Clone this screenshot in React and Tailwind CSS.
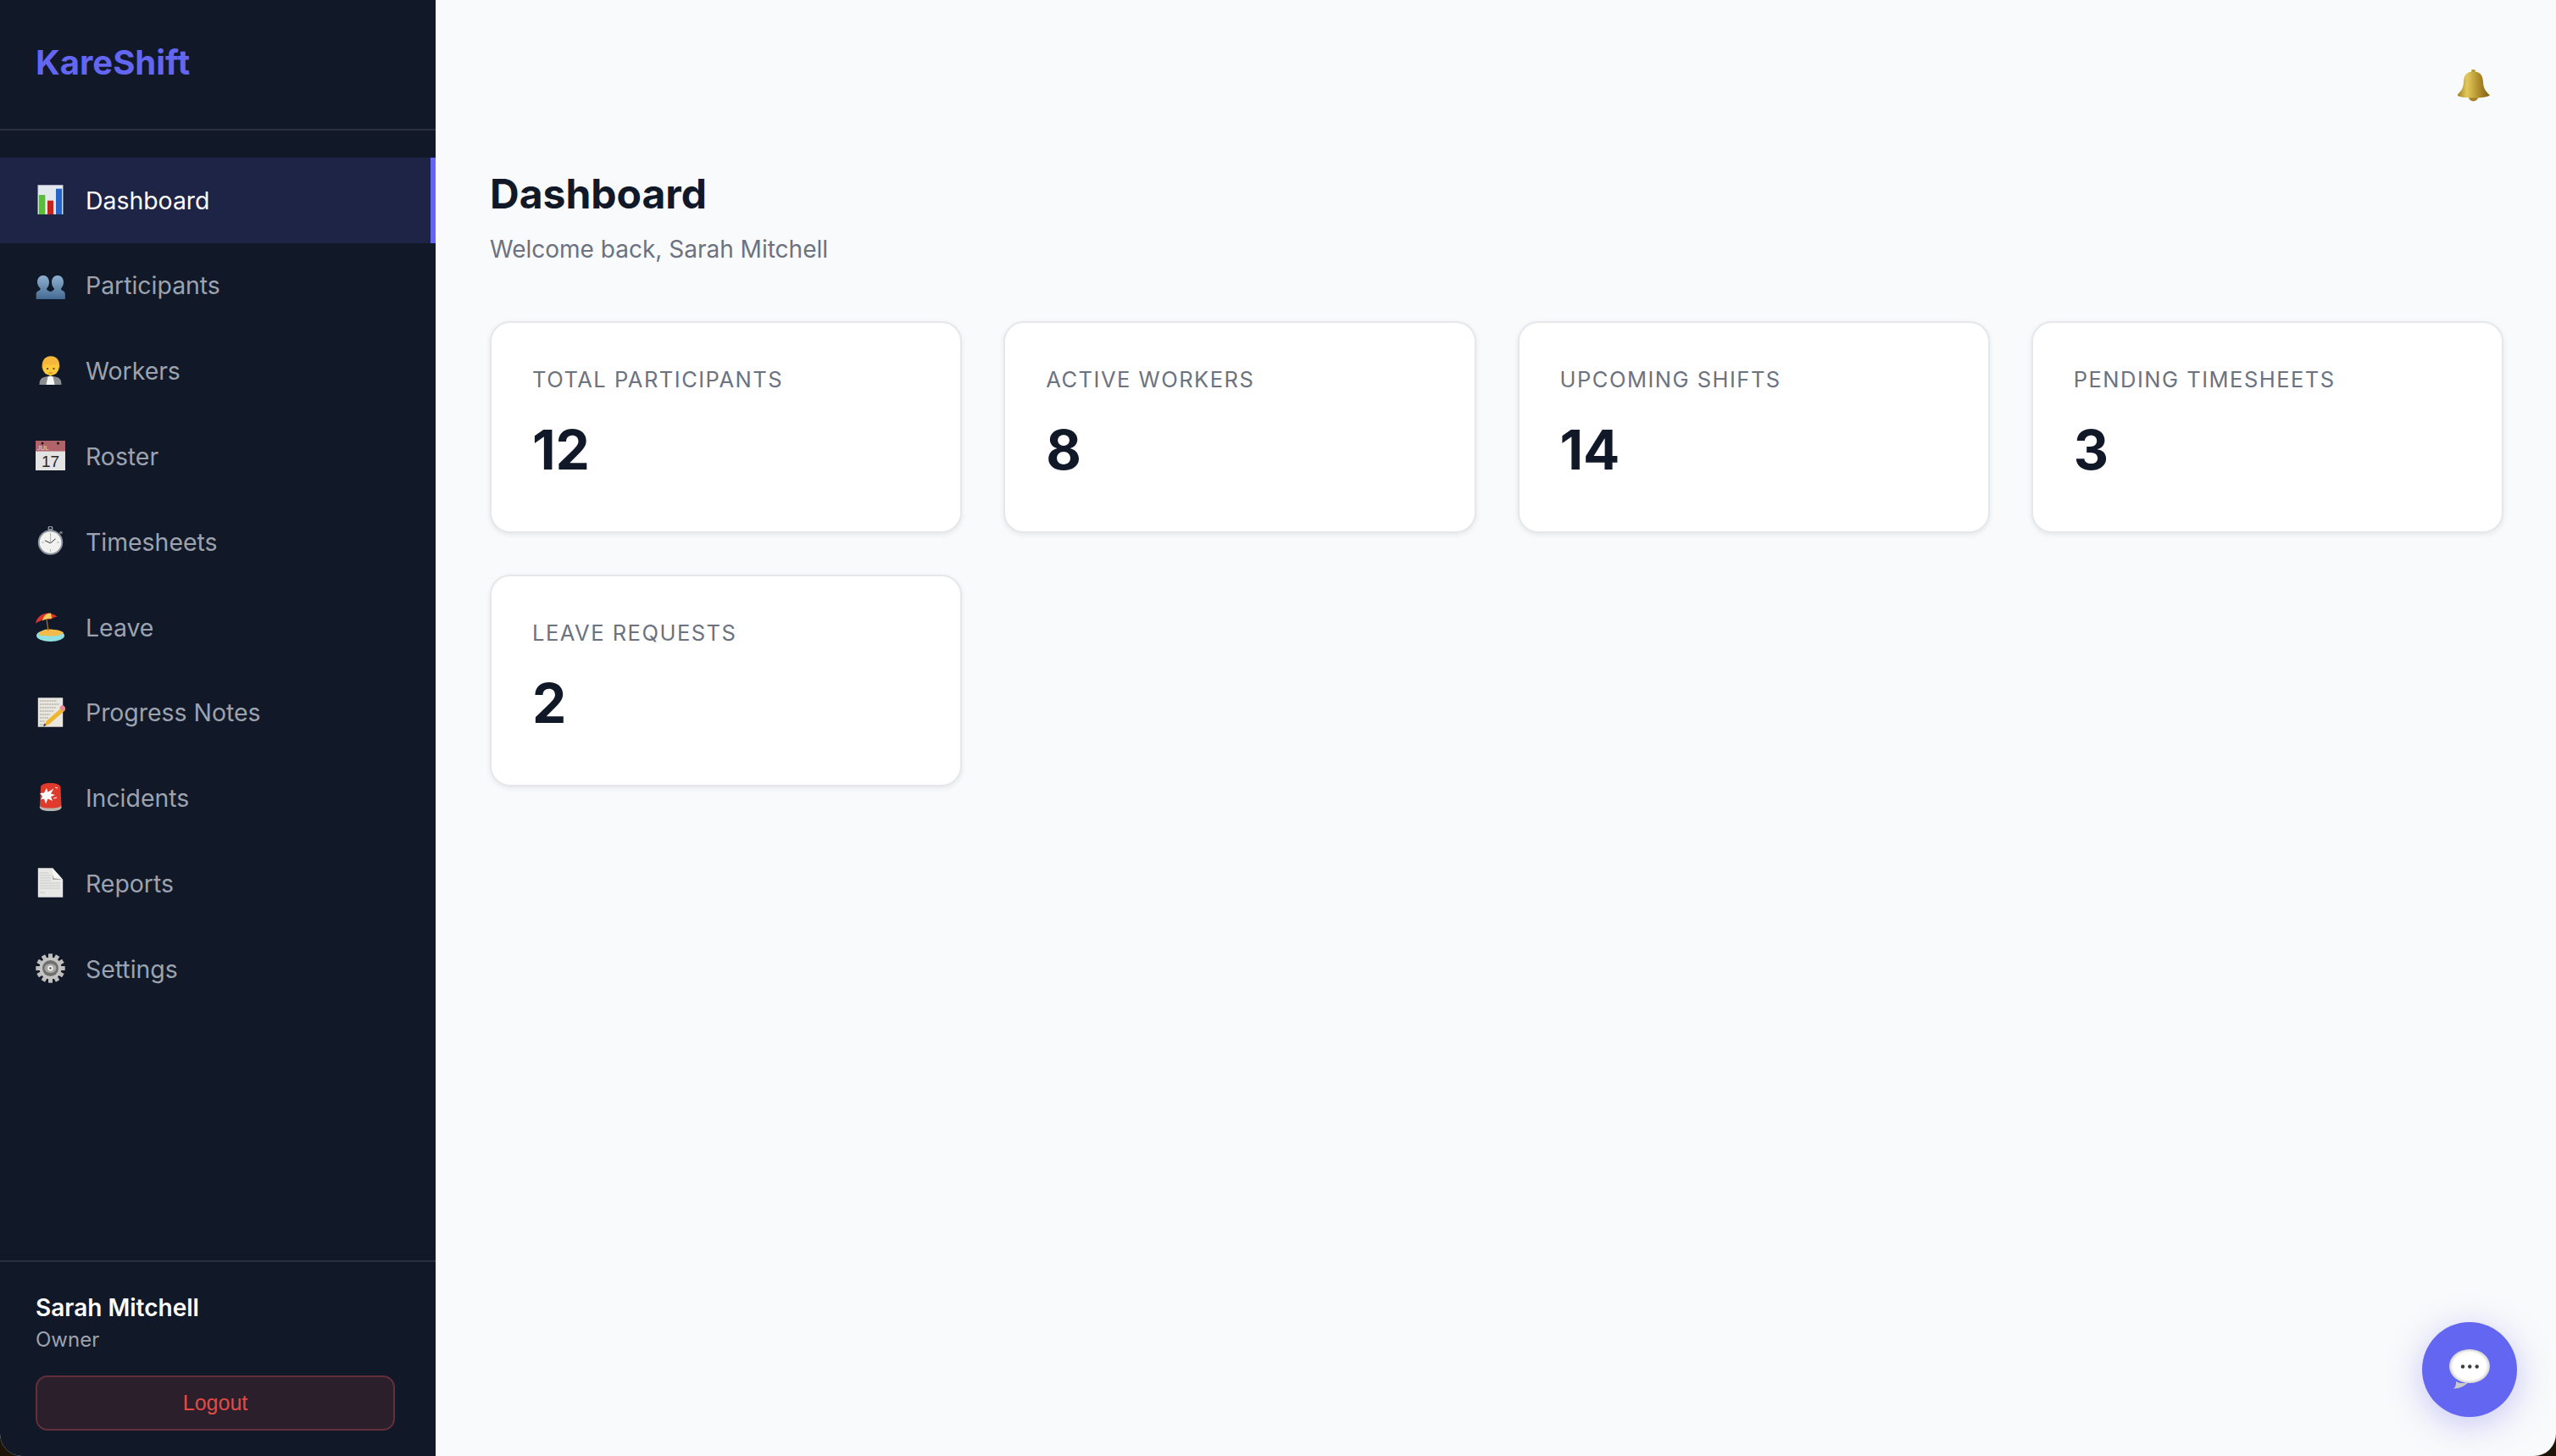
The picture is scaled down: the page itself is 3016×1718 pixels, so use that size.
const inter = '[font-family:Inter,"Noto_Sans",sans-serif]'

function ChartEmoji() {
  return (
    <svg viewBox="0 0 35 35" className="w-[35px] h-[35px]">
      <rect x="2.800" y="0.300" width="29.400" height="34.700" fill="#e3e8ef" stroke="#9aa3ad" strokeWidth="0.600" />
      <rect x="4" y="12" width="7.300" height="23" fill="#5cba3c" />
      <rect x="14" y="18.700" width="7" height="16.300" fill="#c0261d" />
      <rect x="24" y="4.700" width="7" height="30.300" fill="#2a63c7" />
    </svg>
  )
}

function PeopleEmoji() {
  return (
    <svg viewBox="0 0 35 35" className="w-[35px] h-[35px]">
      <defs>
        <linearGradient id="bust" x1="0" y1="0" x2="0" y2="1">
          <stop offset="0" stopColor="#8fb0d2" />
          <stop offset="1" stopColor="#456a92" />
        </linearGradient>
      </defs>
      <g fill="url(#bust)">
        <path d="M26 6c4 0 7 3 7 8 0 3-1.300 6-3 7.500 0 1.500 1 2.200 3 3 1.300.7 1.800 2 1.800 3.500V34H17V28c0-1.500.6-2.800 2-3.500 2-.8 3-1.500 3-3-1.800-1.500-3-4.500-3-7.500 0-5 3-8 7-8z" />
        <path d="M9 6c4 0 7 3 7 8 0 3-1.200 6-3 7.500 0 1.500 1 2.200 3 3 2 .8 4 1.800 4 3.500V34H.7V28c0-1.500.6-2.800 2-3.500 2-.8 3-1.500 3-3C3.900 20 2 17 2 14c0-5 3-8 7-8z" />
      </g>
    </svg>
  )
}

function WorkerEmoji() {
  return (
    <svg viewBox="0 0 35 35" className="w-[35px] h-[35px]">
      <path d="M4.500 35c0-6 2-8.500 7.500-9.500l5.500-1 5.500 1c5.500 1 7.500 3.500 7.500 9.500z" fill="#8b8d8f" />
      <path d="M12.500 35l2-9.500 3-1 3 1 2 9.500z" fill="#f7f7f7" />
      <circle cx="17.800" cy="14.500" r="9.700" fill="#fdc93a" />
      <path d="M8 17C6.500 8 10 1.300 18 1.300S29.500 8 28 17c-.6-3-1.500-5-3-6.500-3 1.200-9 1.200-12.500 0C10 12 8.600 14 8 17z" fill="#f6b73c" />
      <circle cx="14" cy="16" r="1.100" fill="#4a3210" />
      <circle cx="21.500" cy="16" r="1.100" fill="#4a3210" />
      <path d="M15.800 21h4" stroke="#a5651b" strokeWidth="0.800" />
    </svg>
  )
}

function CalendarEmoji() {
  return (
    <svg viewBox="0 0 35 35" className="w-[35px] h-[35px]">
      <rect y="0" width="35" height="35" fill="#e3e3e3" />
      <rect y="0" width="35" height="12.500" fill="#b0646a" />
      <circle cx="8" cy="3" r="1.500" fill="#15171f" />
      <circle cx="26.500" cy="3" r="1.500" fill="#15171f" />
      <text x="2" y="11" fontSize="7.500" fill="#f0dcdc" fontFamily="Liberation Sans">JUL</text>
      <text x="7" y="31" fontSize="19" fill="#26272b" fontFamily="Liberation Sans">17</text>
    </svg>
  )
}

function StopwatchEmoji() {
  return (
    <svg viewBox="0 0 35 35" className="w-[35px] h-[35px]">
      <circle cx="17.500" cy="2.500" r="2.400" fill="none" stroke="#a0a4a8" strokeWidth="1.200" />
      <rect x="15.500" y="3" width="4" height="3" fill="#8d9196" />
      <circle cx="30" cy="7.500" r="1.800" fill="#70747a" />
      <circle cx="17.500" cy="19" r="14.700" fill="#8f96a0" />
      <circle cx="17.500" cy="19" r="12.800" fill="#f1f1ef" />
      <path d="M17.500 9v10" stroke="#d38a72" strokeWidth="0.700" />
      <path d="M11 16.800l6.500 3 6-5" fill="none" stroke="#35363a" strokeWidth="1" />
      <path d="M17.500 8v3M17.500 27v3M7 19h3M25 19h3" stroke="#9b9b9b" strokeWidth="0.700" />
    </svg>
  )
}

function BeachEmoji() {
  return (
    <svg viewBox="0 0 35 35" className="w-[35px] h-[35px]">
      <ellipse cx="17.500" cy="28" rx="16.500" ry="7" fill="#8fe0e2" />
      <path d="M3 27c3-6 9-7 15-6.500 5 .5 12 1 15 4-3 3-8 4-14 4-6 0-13-.3-16-1.500z" fill="#f3bb4a" />
      <path d="M13 9l2 13" stroke="#a5702e" strokeWidth="1.300" />
      <path d="M0 13.500C2 3 14-3 25.700 5.500c-3.500.5-6 2-8.700 3.500-6-1-11 1-17 4.500z" fill="#d9352d" />
      <path d="M8 10.500C9.500 4 14 .8 18 1.500l1 6.500c-4-.6-7 .6-11 2.500z" fill="#f2cf5a" />
    </svg>
  )
}

function MemoEmoji() {
  return (
    <svg viewBox="0 0 35 35" className="w-[35px] h-[35px]">
      <rect x="2.800" y="0.300" width="29.400" height="34.400" fill="#e9e7e0" />
      <g stroke="#77766f" strokeWidth="0.700" strokeDasharray="2 0.800">
        <path d="M5 4h20M5 8h23M5 12h19M5 16h16M5 20h12M5 24h10M5 28h6M5 32h8" />
      </g>
      <path d="M32.500 10.500l-20 17.500-3.500 6.500 7-3L35 15z" fill="#eeb52f" />
      <path d="M31 9l-3 3 4.500 4.500 2.500-3c.500-2-2-5-4-4.500z" fill="#e88b95" />
      <path d="M9 34.500l1.500-4 2 2z" fill="#3d3a35" />
    </svg>
  )
}

function SirenEmoji() {
  return (
    <svg viewBox="0 0 35 35" className="w-[35px] h-[35px]">
      <path d="M4.700 29c0 3 4 5 13 5s13-2 13-5l-1-2H6z" fill="#b9b4ae" />
      <path d="M6 6c0-3 4-5 11.500-5S29.500 3 29.500 6l1 22c-3 2-7 2.500-13 2.500S7 30 5 28z" fill="#df3a2c" />
      <path d="M13 7l1.500 4.500 7-4-3.500 6 5 1.500-5 2 2 5-5.500-2.500-2.500 6-2-6-4 1 2-4-3-3.500 5-.5z" fill="#fff" />
      <path d="M23 6l3 1M21 19l4-1" stroke="#fff" strokeWidth="1" />
    </svg>
  )
}

function DocEmoji() {
  return (
    <svg viewBox="0 0 35 35" className="w-[35px] h-[35px]">
      <path d="M2.800 0.300H20L32.200 14v20.700H2.800z" fill="#e7e7e5" />
      <path d="M20 .3c1 5 0 10 0 13.700h12.200z" fill="#a9a9a7" />
      <path d="M20 .3c-.5 6 1 11 2 12 3 .3 7 .8 10.200 1.700z" fill="#f8f8f7" />
      <path d="M5 6h10M5 9h13M5 12h13M5 15h13M5 18h24M5 21h24M5 24h24M5 29h6" stroke="#c4c4c2" strokeWidth="0.800" />
    </svg>
  )
}

function GearEmoji() {
  const teeth = [0, 30, 60, 90, 120, 150, 180, 210, 240, 270, 300, 330]
  return (
    <svg viewBox="0 0 35 35" className="w-[35px] h-[35px]">
      {teeth.map(a => (
        <rect key={a} x="15" y="0.300" width="5" height="7" fill="#bdbdbb" transform={`rotate(${a} 17.500 17.500)`} />
      ))}
      <circle cx="17.500" cy="17.500" r="13" fill="#c3c3c1" />
      <circle cx="17.500" cy="17.500" r="9.500" fill="#6f6f70" />
      <ellipse cx="17.500" cy="17.500" rx="7" ry="5.500" fill="#a7a7a6" />
      <circle cx="17.500" cy="17.500" r="3.200" fill="#eeeeec" />
      <circle cx="17.500" cy="17.500" r="1.300" fill="#5a5a5b" />
    </svg>
  )
}

function BellEmoji() {
  return (
    <svg viewBox="0 0 38 38" className="w-[38px] h-[38px]">
      <defs>
        <linearGradient id="gold" x1="0" y1="0" x2="1" y2="0">
          <stop offset="0" stopColor="#9a7a1f" />
          <stop offset="0.300" stopColor="#e3c95c" />
          <stop offset="0.650" stopColor="#b18f2c" />
          <stop offset="1" stopColor="#7d5f14" />
        </linearGradient>
      </defs>
      <ellipse cx="18.500" cy="32.500" rx="5.500" ry="5" fill="#a67f2b" />
      <rect x="16" y="0" width="5" height="4" rx="2" fill="#b8962f" />
      <path d="M18.500 2.500c8 0 11 4 11.500 12 .3 7 2 10 8 16-4 2.500-11.500 3-19.500 3S3 33 -1 30.500c6-6 7.700-9 8-16 .4-8 3.500-12 11.500-12z" fill="url(#gold)" />
    </svg>
  )
}

function BubbleEmoji() {
  return (
    <svg viewBox="0 0 48 48" className="w-[48px] h-[48px]">
      <defs>
        <radialGradient id="bub" cx="0.500" cy="0.500" r="0.620">
          <stop offset="0.650" stopColor="#ffffff" />
          <stop offset="1" stopColor="#9a9a9a" />
        </radialGradient>
      </defs>
      <path d="M5 46.500c2.500-2 3.200-4.500 3-8.500 3 2 8 3 14.500 1-4 4.500-10 7.500-17.500 7.500z" fill="#c9c9cb" />
      <ellipse cx="24" cy="20" rx="24" ry="20" fill="url(#bub)" />
      <circle cx="16" cy="20.500" r="2.200" fill="#3d3d3d" />
      <circle cx="24.300" cy="20.500" r="2.200" fill="#3d3d3d" />
      <circle cx="32.700" cy="20.500" r="2.200" fill="#3d3d3d" />
    </svg>
  )
}

const navItems = [
  { label: 'Dashboard', icon: ChartEmoji, active: true },
  { label: 'Participants', icon: PeopleEmoji },
  { label: 'Workers', icon: WorkerEmoji },
  { label: 'Roster', icon: CalendarEmoji },
  { label: 'Timesheets', icon: StopwatchEmoji },
  { label: 'Leave', icon: BeachEmoji },
  { label: 'Progress Notes', icon: MemoEmoji },
  { label: 'Incidents', icon: SirenEmoji },
  { label: 'Reports', icon: DocEmoji },
  { label: 'Settings', icon: GearEmoji },
]

const stats = [
  { label: 'Total Participants', value: 12 },
  { label: 'Active Workers', value: 8 },
  { label: 'Upcoming Shifts', value: 14 },
  { label: 'Pending Timesheets', value: 3 },
  { label: 'Leave Requests', value: 2 },
]

function NavItem({ item }) {
  const Icon = item.icon
  return (
    <a className={`flex items-center h-[100.8px] pl-[42px] text-[28.4px] border-r-[6px] ${item.active ? 'bg-[#1e2446] text-white border-[#6366f1]' : 'text-[#9ca3af] border-transparent'}`}>
      <span className="w-[35px] h-[35px] mr-[24px] -mt-[2px] shrink-0"><Icon /></span>
      <span className="mt-[1px]">{item.label}</span>
    </a>
  )
}

function StatCard({ label, value }) {
  return (
    <div className="h-[250px] bg-white rounded-[24px] border-2 border-[#e5e7eb] shadow-[0_2px_6px_rgba(0,0,0,0.08)] px-[48px] pt-[48px]">
      <div className="text-[25.5px] leading-[38px] tracking-[1.5px] uppercase text-[#6b7280]">{label}</div>
      <div className="mt-[25px] text-[64px] leading-[78px] font-bold text-[#111827]">{value}</div>
    </div>
  )
}

export default function App() {
  return (
    <div className={`h-screen bg-[#1d1507] ${inter}`}>
      <div className="relative flex h-full overflow-hidden rounded-b-[26px] bg-[#f9fafb]">
        {/* Sidebar */}
        <aside className="w-[514px] shrink-0 flex flex-col bg-[#111827]">
          <div className="h-[154px] pl-[42px] pt-[49px] border-b-2 border-[#2a303d]">
            <div className="text-[40px] leading-[50px] font-bold text-[#6366f1]">KareShift</div>
          </div>
          <nav className="flex-1 pt-[32px]">
            {navItems.map(item => <NavItem key={item.label} item={item} />)}
          </nav>
          <div className="h-[231px] border-t-2 border-[#2a303d] pl-[42px] pr-[48px] pt-[34px]">
            <div className="text-[28px] leading-[40px] font-semibold text-white">Sarah Mitchell</div>
            <div className="text-[24px] leading-[36px] text-[#9ca3af]">Owner</div>
            <button className="mt-[24px] w-full h-[65px] rounded-[14px] border-2 border-[#63303a] bg-[#2b1f2c] text-[#e14b46] text-[25px] [font-family:'Liberation_Sans',sans-serif]">Logout</button>
          </div>
        </aside>

        {/* Main */}
        <main className="flex-1 min-w-0 pl-[64px] pr-[62px]">
          <div className="flex justify-end h-[82px] pt-[82px] pr-[16px]">
            <BellEmoji />
          </div>
          <h1 className="mt-[115px] text-[48px] leading-[64px] font-bold text-[#111827]">Dashboard</h1>
          <p className="mt-[11px] text-[28px] leading-[44px] text-[#6b7280]">Welcome back, Sarah Mitchell</p>
          <div className="mt-[63px] grid grid-cols-4 gap-[49px]">
            {stats.map(s => <StatCard key={s.label} {...s} />)}
          </div>
        </main>

        {/* Chat button */}
        <button className="absolute right-[46px] bottom-[46px] w-[112px] h-[112px] rounded-full bg-[#6366f1] shadow-[0_8px_40px_rgba(99,102,241,0.35)] flex items-center justify-center">
          <BubbleEmoji />
        </button>
      </div>
    </div>
  )
}
